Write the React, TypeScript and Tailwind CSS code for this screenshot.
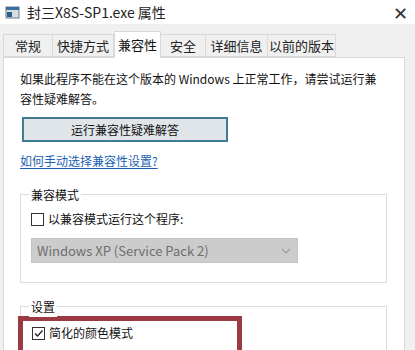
import React from 'react';

const font = { fontFamily: '"Noto Sans CJK SC", "Noto Sans", sans-serif' };

const tabs = [
  { label: '常规', w: 'w-[50px]' },
  { label: '快捷方式', w: 'w-[62px]' },
  { label: '兼容性', w: 'w-[47px]', active: true },
  { label: '安全', w: 'w-[46px]' },
  { label: '详细信息', w: 'w-[63px]' },
  { label: '以前的版本', w: 'w-[69px]' },
];

const WinIcon = () => (
  <svg width="15" height="15" viewBox="0 0 15 15">
    <rect x="1" y="2" width="13" height="11" fill="#d8dde3" stroke="#6b7a8a" />
    <rect x="1" y="2" width="13" height="3" fill="#3a6ea5" />
    <rect x="2" y="7" width="5" height="5" fill="#2f5d8a" />
  </svg>
);

const Chevron = () => (
  <svg width="10" height="6" viewBox="0 0 10 6">
    <path d="M1 1 L5 5 L9 1" fill="none" stroke="#9a9a9a" strokeWidth="1.2" />
  </svg>
);

const App = () => {
  return (
    <div className="w-[415px] h-[350px] overflow-hidden bg-[#f0f0f0] flex flex-col text-[12px] text-[#111]" style={font}>
      {/* title bar */}
      <div className="h-[24px] bg-white flex items-center pl-[5px] pr-[7px] shrink-0">
        <WinIcon />
        <span className="ml-[7px] text-[14px] text-[#222]">封三X8S-SP1.exe 属性</span>
        <span className="ml-auto text-[18px] font-light text-[#333] leading-none">✕</span>
      </div>

      {/* tabs */}
      <div className="flex items-end pl-[3px] mt-[7px] h-[26px] shrink-0">
        {tabs.map((t) =>
          t.active ? (
            <div
              key={t.label}
              className={`${t.w} h-[27px] -mb-[1px] bg-white border border-b-0 border-[#d9d9d9] flex items-center justify-center z-10 text-[13px]`}
            >
              {t.label}
            </div>
          ) : (
            <div
              key={t.label}
              className={`${t.w} h-[23px] bg-[#f0f0f0] border border-[#d9d9d9] -ml-[1px] first:ml-0 flex items-center justify-center text-[13px] text-[#222]`}
            >
              {t.label}
            </div>
          )
        )}
      </div>

      {/* tab page */}
      <div className="ml-[3px] w-[402px] flex-1 bg-white border border-[#d9d9d9] pl-[16px] flex flex-col">
        <p className="mt-[11px] leading-[20px] whitespace-nowrap">
          如果此程序不能在这个版本的 Windows 上正常工作，请尝试运行兼
          <br />
          容性疑难解答。
        </p>

        <div className="mt-[8px] ml-[2px] w-[206px] h-[25px] border-2 border-[#3f7b92] bg-[#dfe5e8] flex items-center justify-center text-[12px]">
          运行兼容性疑难解答
        </div>

        <a className="mt-[9px] leading-[20px] text-[#1a5fb4] underline underline-offset-2 decoration-[#1a5fb4] w-max">
          如何手动选择兼容性设置?
        </a>

        {/* 兼容模式 */}
        <div className="mt-[23px] w-[367px] h-[89px] border border-[#dcdcdc] relative flex flex-col pl-[10px]">
          <span className="absolute -top-[10px] left-[8px] bg-white px-[2px] leading-[20px]">兼容模式</span>
          <div className="mt-[15px] flex items-center gap-[4px]">
            <span className="w-[13px] h-[13px] border border-[#333] bg-white" />
            <span>以兼容模式运行这个程序:</span>
          </div>
          <div className="mt-[10px] w-[267px] h-[25px] bg-[#cccccc] border border-[#c4c4c4] flex items-center pl-[5px] pr-[6px] text-[13px] text-[#6e6e6e]">
            <span>Windows XP (Service Pack 2)</span>
            <span className="ml-auto">
              <Chevron />
            </span>
          </div>
        </div>

        {/* 设置 */}
        <div className="mt-[23px] w-[367px] h-[60px] border border-[#dcdcdc] border-b-0 relative flex flex-col">
          <span className="absolute -top-[10px] left-[8px] bg-white px-[2px] leading-[20px]">设置</span>
          <div className="mt-[9px] -ml-[3px] w-[224px] h-[45px] border-[5px] border-[#9b3a42] pl-[9px] pt-[3px]">
            <div className="flex items-center gap-[4px]">
              <span className="w-[13px] h-[13px] border border-[#333] bg-white flex items-center justify-center">
                <svg width="11" height="11" viewBox="0 0 11 11">
                  <path d="M2 5.5 L4.5 8 L9.5 2.5" fill="none" stroke="#222" strokeWidth="1.3" />
                </svg>
              </span>
              <span>简化的颜色模式</span>
            </div>
          </div>
        </div>
      </div>
    </div>
  );
};

export default App;
